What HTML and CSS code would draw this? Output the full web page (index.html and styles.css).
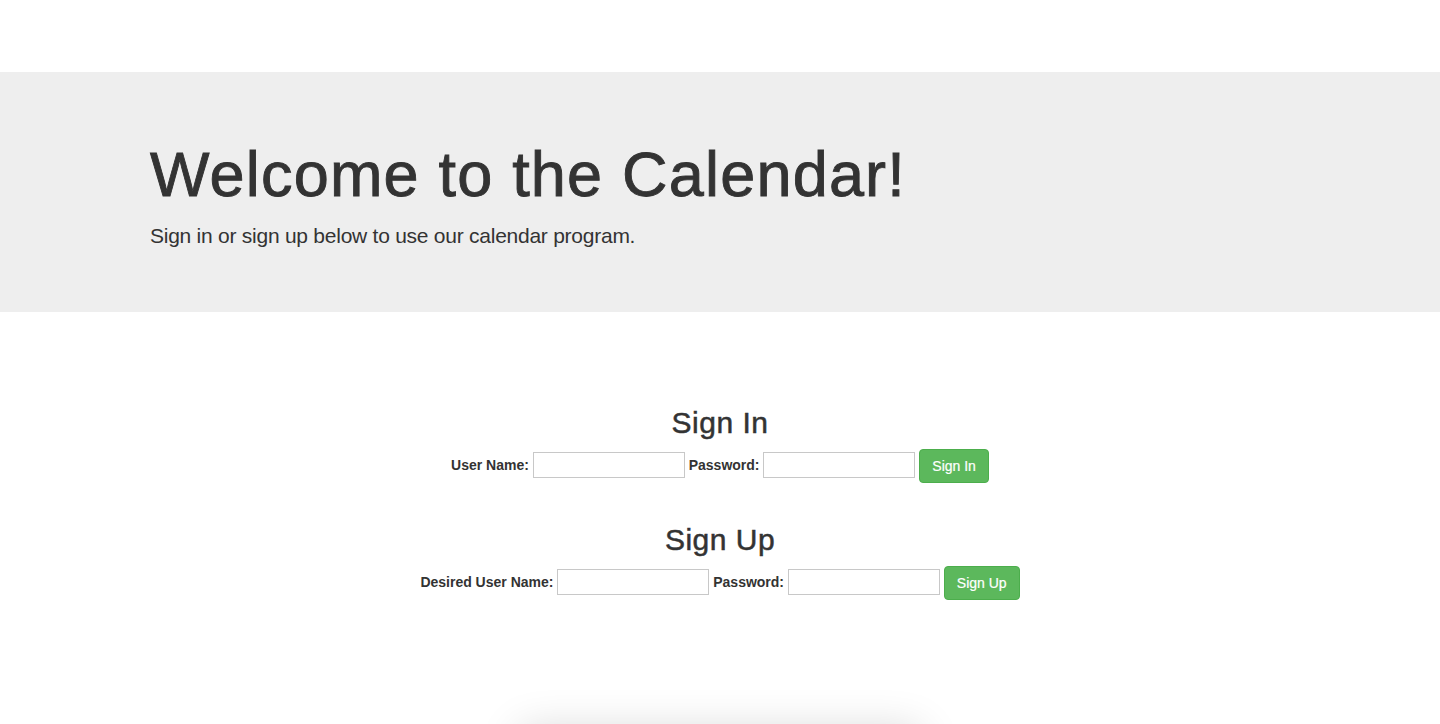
FILE: index.html
```html
<!DOCTYPE html>
<html lang="en">
<head>
<meta charset="utf-8">
<title>Calendar</title>
<link rel="stylesheet" href="styles.css">
</head>
<body>
<div class="topspace"></div>
<div class="jumbotron">
  <div class="container">
    <h1>Welcome to the Calendar!</h1>
    <p>Sign in or sign up below to use our calendar program.</p>
  </div>
</div>
<div class="forms">
  <section class="auth">
    <h2>Sign In</h2>
    <form class="row">
      <label>User Name:</label> <input type="text"> <label>Password:</label> <input type="password"> <button type="button" class="btn">Sign In</button>
    </form>
  </section>
  <section class="auth signup">
    <h2>Sign Up</h2>
    <form class="row">
      <label>Desired User Name:</label> <input type="text"> <label>Password:</label> <input type="password"> <button type="button" class="btn">Sign Up</button>
    </form>
  </section>
  <div class="calendar-box"></div>
</div>
</body>
</html>
```
FILE: styles.css
```css
html, body {
  margin: 0;
  padding: 0;
  background: #fff;
  color: #333;
  font-family: "Liberation Sans", Arial, sans-serif;
  font-size: 14px;
  line-height: 1.42857;
  overflow: hidden;
  height: 724px;
}
.topspace {
  height: 72px;
}
.jumbotron {
  background: #eeeeee;
  padding: 48px 0;
}
.container {
  width: 1170px;
  margin: 0 auto;
  padding: 0 15px;
  box-sizing: border-box;
}
.jumbotron h1 {
  font-size: 63px;
  font-weight: 500;
  line-height: 1.1;
  margin: 20px 0 10px;
  color: #333;
  letter-spacing: 1.2px;
  -webkit-text-stroke: 0.9px #333;
}
.jumbotron p {
  font-size: 21px;
  font-weight: 300;
  line-height: 30px;
  margin: 0 0 13px;
  padding-top: 2px;
  color: #333;
  letter-spacing: -0.25px;
}
.forms {
  text-align: center;
  padding-top: 94px;
}
.auth h2 {
  font-size: 30px;
  font-weight: 500;
  line-height: 33px;
  margin: 0 0 10px;
  letter-spacing: 0.5px;
  -webkit-text-stroke: 0.5px #333;
}
.signup {
  margin-top: 40px;
}
.row {
  margin: 0;
  height: 34px;
}
.row label {
  font-weight: bold;
  font-size: 14px;
  vertical-align: middle;
}
.row input {
  width: 152px;
  height: 26px;
  box-sizing: border-box;
  border: 1px solid #c8c8c8;
  border-radius: 0;
  padding: 1px 2px;
  margin: 0 0 3px;
  vertical-align: middle;
  font-family: inherit;
  font-size: 13px;
}
.btn {
  display: inline-block;
  height: 34px;
  padding: 6px 12px;
  box-sizing: border-box;
  font-family: inherit;
  font-size: 14px;
  line-height: 20px;
  color: #fff;
  background: #5cb85c;
  border: 1px solid #4cae4c;
  border-radius: 4px;
  vertical-align: middle;
  margin-left: 0;
  -webkit-text-stroke: 0.2px #fff;
}
.calendar-box {
  width: 400px;
  height: 200px;
  margin: 130px auto 0;
  background: #fff;
  box-shadow: 0 0 40px rgba(0, 0, 0, 0.16);
}
```
